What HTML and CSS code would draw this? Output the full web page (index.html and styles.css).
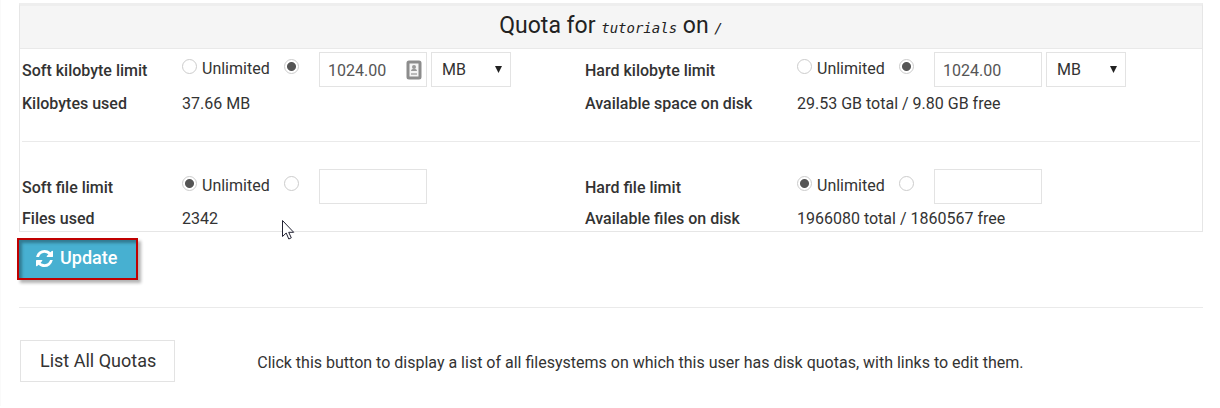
FILE: index.html
```html
<!DOCTYPE html>
<html lang="en">
<head>
  <meta charset="UTF-8" />
  <meta name="viewport" content="width=device-width, initial-scale=1.0"/>
  <title>Edit Quota</title>
  <link rel="stylesheet" href="styles.css">
</head>
<body>

  <form class="quota-form" id="quotaForm">
    <div class="panel">
      <h1 class="panel-title">Quota for <code>tutorials</code> on <code>/</code></h1>

      <div class="row">
        <label class="name" for="softBlocks">Soft kilobyte limit</label>
        <div class="limit">
          <label class="choice"><input type="radio" name="softBlocksMode"> Unlimited</label>
          <input type="radio" name="softBlocksMode" aria-label="Limit soft kilobytes" checked>
          <div class="field">
            <input type="text" class="amount" id="softBlocks" value="1024.00">
            <svg class="autofill" width="16" height="20" viewBox="0 0 16 20">
              <rect x="2" y="2" width="12" height="16" rx="1" fill="#f4f4f4" stroke="#8c8c8c" stroke-width="3"/>
              <circle cx="8" cy="7" r="2" fill="#999"/>
              <path d="M5 11c0-3 6-3 6 0z" fill="#999"/>
              <path d="M5 13h6v2H5z" fill="#bbb"/>
            </svg>
          </div>
          <select class="unit" aria-label="Soft limit unit">
            <option>MB</option>
            <option>GB</option>
          </select>
        </div>
        <label class="name" for="hardBlocks">Hard kilobyte limit</label>
        <div class="limit">
          <label class="choice"><input type="radio" name="hardBlocksMode"> Unlimited</label>
          <input type="radio" name="hardBlocksMode" aria-label="Limit hard kilobytes" checked>
          <div class="field">
            <input type="text" class="amount" id="hardBlocks" value="1024.00">
          </div>
          <select class="unit" aria-label="Hard limit unit">
            <option>MB</option>
            <option>GB</option>
          </select>
        </div>
      </div>

      <div class="row info">
        <span class="name">Kilobytes used</span>
        <span>37.66 MB</span>
        <span class="name">Available space on disk</span>
        <span>29.53 GB total / 9.80 GB free</span>
      </div>

      <hr class="divider">

      <div class="row">
        <label class="name" for="softFiles">Soft file limit</label>
        <div class="limit">
          <label class="choice"><input type="radio" name="softFilesMode" checked> Unlimited</label>
          <input type="radio" name="softFilesMode" aria-label="Limit soft files">
          <div class="field">
            <input type="text" class="amount" id="softFiles">
          </div>
        </div>
        <label class="name" for="hardFiles">Hard file limit</label>
        <div class="limit">
          <label class="choice"><input type="radio" name="hardFilesMode" checked> Unlimited</label>
          <input type="radio" name="hardFilesMode" aria-label="Limit hard files">
          <div class="field">
            <input type="text" class="amount" id="hardFiles">
          </div>
        </div>
      </div>

      <div class="row info">
        <span class="name">Files used</span>
        <span>2342</span>
        <span class="name">Available files on disk</span>
        <span>1966080 total / 1860567 free</span>
      </div>
    </div>

    <button type="submit" class="update">
      <svg width="17" height="17" viewBox="0 0 1536 1536" fill="#fff">
        <path d="M1511 928q0 5-1 7-64 268-268 434.500T764 1536q-146 0-282.500-55T238 1324l-129 129q-19 19-45 19t-45-19-19-45V960q0-26 19-45t45-19h448q26 0 45 19t19 45-19 45l-137 137q71 66 161 102t187 36q134 0 250-65t186-179q11-17 53-117 8-23 30-23h192q13 0 22.500 9.500t9.500 22.500zm25-800v448q0 26-19 45t-45 19h-448q-26 0-45-19t-19-45 19-45l138-138Q969 256 768 256q-134 0-250 65T332 500q-11 17-53 117-8 23-30 23H50q-13 0-22.500-9.500T18 608v-7q65-268 270-434.500T768 0q146 0 284 55.500T1297 212l130-129q19-19 45-19t45 19 19 45z"/>
      </svg>
      Update
    </button>
  </form>

  <div class="actions">
    <button type="button" class="list-all">List All Quotas</button>
    <p class="hint">Click this button to display a list of all filesystems on which this user has disk quotas, with links to edit them.</p>
  </div>

  <svg class="cursor" width="13" height="20" viewBox="0 0 13 20">
    <path d="M.5.5v16l3.700-3.500 2.600 6 2.500-1.200-2.600-5.500h5z" fill="#fff" stroke="#223"/>
  </svg>

</body>
</html>
```
FILE: styles.css
```css
* {
  box-sizing: border-box;
}
body {
  margin: 0;
  padding: 3px 17px 24px 18px;
  border-left: 1px solid #fafafa;
  font-family: Roboto, sans-serif;
  font-size: 16px;
  line-height: 20px;
  color: #333;
  background: #fff;
}
input, select, button {
  font: inherit;
  color: inherit;
  margin: 0;
}
.quota-form {
  padding-bottom: 27px;
  border-bottom: 1px solid #eaeaea;
}
.panel {
  border: 1px solid #e6e6e6;
  border-top: 3px solid #eee;
}
.panel-title {
  margin: 0;
  padding: 6px 0 8px;
  border-bottom: 1px solid #e9e9e9;
  background: #f5f5f5;
  font-size: 23px;
  line-height: 28px;
  font-weight: 400;
  text-align: center;
  color: #222;
}
.panel-title code {
  font-family: "DejaVu Sans Mono", monospace;
  font-size: 14px;
  line-height: 14px;
  font-style: italic;
}
.row {
  display: grid;
  grid-template-columns: 160px 403px 212px 1fr;
  align-items: center;
  padding: 3px 2px;
}
.info {
  padding: 4px 2px 2px;
}
.info:last-child {
  padding: 2px;
}
.name {
  font-weight: 500;
}
.row label.name {
  padding-top: 2px;
}
.limit {
  display: flex;
  align-items: center;
}
.choice {
  display: flex;
  align-items: center;
  gap: 5px;
  width: 102px;
  padding-bottom: 2px;
}
.limit > input[type="radio"] {
  margin-bottom: 6px;
}
.choice input[type="radio"] {
  margin-bottom: 4px;
}
input[type="radio"] {
  appearance: none;
  width: 15px;
  height: 15px;
  border: 1px solid #ccc;
  border-radius: 50%;
  background: #fff;
}
input[type="radio"]:checked {
  background: radial-gradient(circle, #555 4px, #fff 5px);
}
.field {
  position: relative;
  width: 108px;
  margin: 0 4px 0 20px;
}
.amount {
  display: block;
  width: 100%;
  height: 35px;
  padding: 2px 8px 0;
  border: 1px solid #e3e3e3;
  color: #555;
}
.autofill {
  position: absolute;
  right: 5px;
  top: 8px;
}
.unit {
  appearance: none;
  width: 80px;
  height: 35px;
  padding: 0 10px;
  border: 1px solid #e3e3e3;
  border-radius: 0;
  background: #fff url("data:image/svg+xml,%3Csvg xmlns='http://www.w3.org/2000/svg' width='7' height='7'%3E%3Cpath d='M0 0h7L3.500 7z' fill='%23222'/%3E%3C/svg%3E") no-repeat right 8px center;
}
.divider {
  margin: 25px 2px 24px;
  border: 0;
  border-top: 1px solid #eaeaea;
}
.update {
  display: flex;
  align-items: center;
  gap: 7px;
  height: 42px;
  margin: 6px 0 0 -2px;
  padding: 0 19px 2px 17px;
  border: 2px solid #c00000;
  background: #47b0d1;
  color: #fff;
  font-size: 18px;
  font-weight: 500;
  box-shadow: 3px 3px 3px rgba(0,0,0,0.3), inset 3px 3px 3px rgba(0,0,0,0.3);
}
.actions {
  display: flex;
  align-items: center;
  gap: 82px;
  padding: 32px 1px 0;
}
.list-all {
  flex: none;
  height: 42px;
  padding: 0 18px 0 19px;
  border: 1px solid #e3e3e3;
  background: #fff;
  font-size: 18px;
}
.hint {
  margin: 0;
  padding-top: 4px;
}
.cursor {
  position: absolute;
  left: 282px;
  top: 220px;
}
```
